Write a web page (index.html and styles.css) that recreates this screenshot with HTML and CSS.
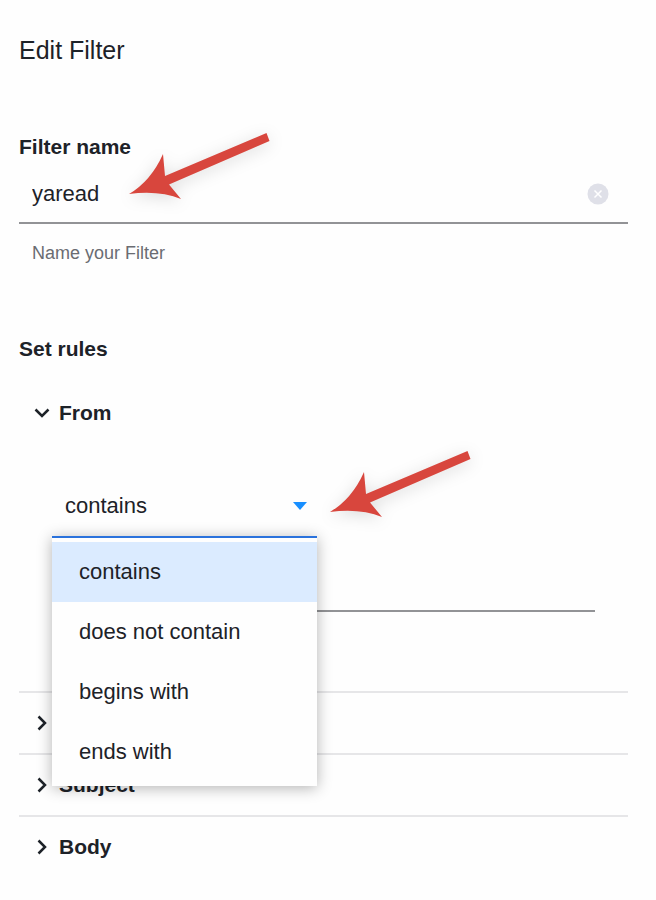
FILE: index.html
```html
<!DOCTYPE html>
<html lang="en">
<head>
    <meta charset="UTF-8">
    <meta name="viewport" content="width=device-width, initial-scale=1.0">
    <title>Edit Filter</title>
    <link rel="stylesheet" href="styles.css">
</head>
<body>
    <form class="filter-form">
        <h1>Edit Filter</h1>

        <section class="name-section">
            <label class="heading" for="filter-name">Filter name</label>
            <div class="name-field">
                <input type="text" id="filter-name" value="yaread" aria-describedby="name-hint">
                <button type="button" class="clear" aria-label="Clear">
                    <svg viewBox="0 0 22 22" width="22" height="22">
                        <circle cx="11" cy="11" r="10.5" fill="#dfe0e8"/>
                        <path d="M7.5 7.5l7 7M14.5 7.5l-7 7" stroke="#fff" stroke-width="1.5" fill="none"/>
                    </svg>
                </button>
                <svg class="arrow arrow-name" viewBox="0 0 142 66" width="142" height="66" aria-hidden="true">
                    <path d="M0 61Q22 48 34 21L36 43L137.500 0L140.500 8L40 51.500L52 66Q30 57 0 61Z"/>
                </svg>
            </div>
            <p class="hint" id="name-hint">Name your Filter</p>
        </section>

        <section class="rules">
            <h2 class="heading">Set rules</h2>

            <button type="button" class="rule-toggle" aria-expanded="true">
                <svg viewBox="0 0 16 16" width="16" height="16"><path d="M1.5 4.5L8 11l6.5-6.5"/></svg>
                From
            </button>
            <div class="rule-body">
                <div class="picker">
                    <select id="match" aria-label="From match type">
                        <option selected>contains</option>
                        <option>does not contain</option>
                        <option>begins with</option>
                        <option>ends with</option>
                    </select>
                    <svg class="caret" viewBox="0 0 14 8" width="14" height="8" aria-hidden="true"><path d="M0 0h14L7 8z" fill="#188fff"/></svg>
                    <ul class="menu">
                        <li><button type="button" class="active">contains</button></li>
                        <li><button type="button">does not contain</button></li>
                        <li><button type="button">begins with</button></li>
                        <li><button type="button">ends with</button></li>
                    </ul>
                    <svg class="arrow arrow-picker" viewBox="0 0 142 66" width="142" height="66" aria-hidden="true">
                        <path d="M0 61Q22 48 34 21L36 43L137.500 0L140.500 8L40 51.500L52 66Q30 57 0 61Z"/>
                    </svg>
                </div>
                <input type="text" class="rule-value" aria-label="From value">
            </div>

            <div class="rule">
                <button type="button" class="rule-toggle" aria-expanded="false">
                    <svg viewBox="0 0 16 16" width="16" height="16"><path d="M4.5 1.5L11 8l-6.5 6.5"/></svg>
                    To/CC
                </button>
            </div>
            <div class="rule">
                <button type="button" class="rule-toggle" aria-expanded="false">
                    <svg viewBox="0 0 16 16" width="16" height="16"><path d="M4.5 1.5L11 8l-6.5 6.5"/></svg>
                    Subject
                </button>
            </div>
            <div class="rule">
                <button type="button" class="rule-toggle" aria-expanded="false">
                    <svg viewBox="0 0 16 16" width="16" height="16"><path d="M4.5 1.5L11 8l-6.5 6.5"/></svg>
                    Body
                </button>
            </div>
        </section>
    </form>
</body>
</html>
```

FILE: styles.css
```css
* { box-sizing: border-box; }
body {
    margin: 0;
    background: #fefefe;
    color: #1d2228;
    font-family: "Helvetica Neue", "Liberation Sans", Arial, sans-serif;
    font-size: 22px;
    line-height: 24px;
}
input, select, button {
    font: inherit;
    color: inherit;
    border: none;
    border-radius: 0;
    background: transparent;
    padding: 0;
    outline: none;
}
button { cursor: pointer; text-align: left; }
h1, h2, p, ul { margin: 0; padding: 0; }
h1 {
    font-size: 25px;
    font-weight: normal;
    line-height: 28px;
}
.filter-form { padding: 36px 28px 20px 19px; }
.heading {
    display: block;
    font-size: 21px;
    font-weight: bold;
    line-height: 24px;
}

/* filter name */
.name-section { margin-top: 71px; }
.name-field {
    position: relative;
    display: flex;
    align-items: center;
    height: 65px;
    padding: 6px 19px 0 13px;
    border-bottom: 2px solid #929396;
}
.name-field input { flex: 1; min-width: 0; height: 56px; }
.clear { display: flex; }
.hint {
    margin-top: 17px;
    padding-left: 13px;
    font-size: 18px;
    color: #6a6c72;
}

/* rules */
.rules { margin-top: 72px; }
.rules h2 { margin-bottom: 34px; }
.rule-toggle {
    display: flex;
    align-items: center;
    gap: 9px;
    width: 100%;
    height: 60px;
    padding-left: 15px;
    font-size: 21px;
    font-weight: bold;
}
.rule-toggle svg {
    fill: none;
    stroke: #1d2228;
    stroke-width: 2.5;
}
.rules h2 + .rule-toggle { height: 36px; }
.rule { border-top: 2px solid #e6e6e8; }
.rule-body { padding: 44px 33px 79px; }
.picker { position: relative; width: 265px; }
.picker select {
    display: block;
    width: 100%;
    height: 61px;
    padding-left: 13px;
    appearance: none;
}
.caret {
    position: absolute;
    top: 27px;
    right: 10px;
    pointer-events: none;
}
.menu {
    position: absolute;
    top: 100%;
    left: 0;
    z-index: 1;
    width: 100%;
    padding: 4px 0;
    list-style: none;
    background: #fefefe;
    border-top: 2px solid #2a72dc;
    box-shadow: 0 2px 14px rgba(0, 0, 0, 0.3);
}
.menu button {
    display: block;
    width: 100%;
    height: 60px;
    padding-left: 27px;
}
.menu .active { background: #dbebff; }
.rule-value {
    display: block;
    width: 100%;
    height: 76px;
    border-bottom: 2px solid #929396;
}

/* red pointers */
.arrow {
    position: absolute;
    overflow: visible;
    fill: #d8463d;
    filter: drop-shadow(0 3px 8px rgba(0, 0, 0, 0.14));
    pointer-events: none;
}
.arrow-name { left: 110px; top: -26px; }
.arrow-picker { left: 278px; top: -24px; }
```
